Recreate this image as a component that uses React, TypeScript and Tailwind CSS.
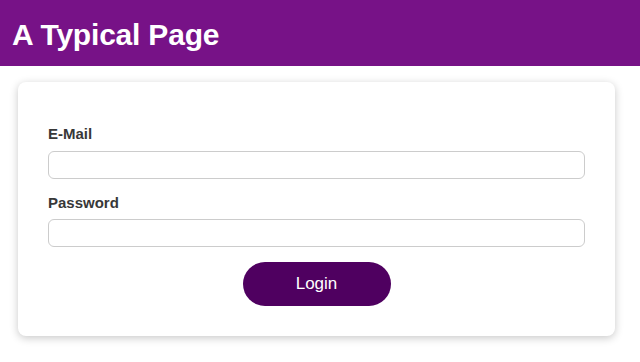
export default function App() {
  return (
    <div className="min-h-screen bg-white font-['Liberation_Sans',Arial,sans-serif]">
      {/* Header */}
      <header className="h-[66px] bg-[#771287] px-3 pt-[12px]">
        <h1 className="text-[30px] font-bold leading-normal tracking-[-0.2px] text-white">A Typical Page</h1>
      </header>

      {/* Login card */}
      <main className="pt-4">
        <div className="ml-[18px] w-[597px] rounded-lg bg-white px-[30px] pt-[43px] pb-[30px] shadow-[0_2px_8px_rgba(0,0,0,0.22)]">
          <form className="flex flex-col" onSubmit={(e) => e.preventDefault()}>
            <label htmlFor="email" className="mb-[9px] text-[15px] font-bold leading-[17px] text-[#383838]">
              E-Mail
            </label>
            <input
              id="email"
              type="email"
              className="h-[28px] rounded-md border border-[#cccccc] bg-white px-2 outline-none"
            />

            <label htmlFor="password" className="mt-[15px] mb-[8px] text-[15px] font-bold leading-[17px] text-[#383838]">
              Password
            </label>
            <input
              id="password"
              type="password"
              className="h-[28px] rounded-md border border-[#cccccc] bg-white px-2 outline-none"
            />

            <div className="mt-[15px] flex justify-center">
              <button
                type="submit"
                className="h-[44px] w-[148px] rounded-full bg-[#4f0060] text-[17px] text-white"
              >
                Login
              </button>
            </div>
          </form>
        </div>
      </main>
    </div>
  );
}
